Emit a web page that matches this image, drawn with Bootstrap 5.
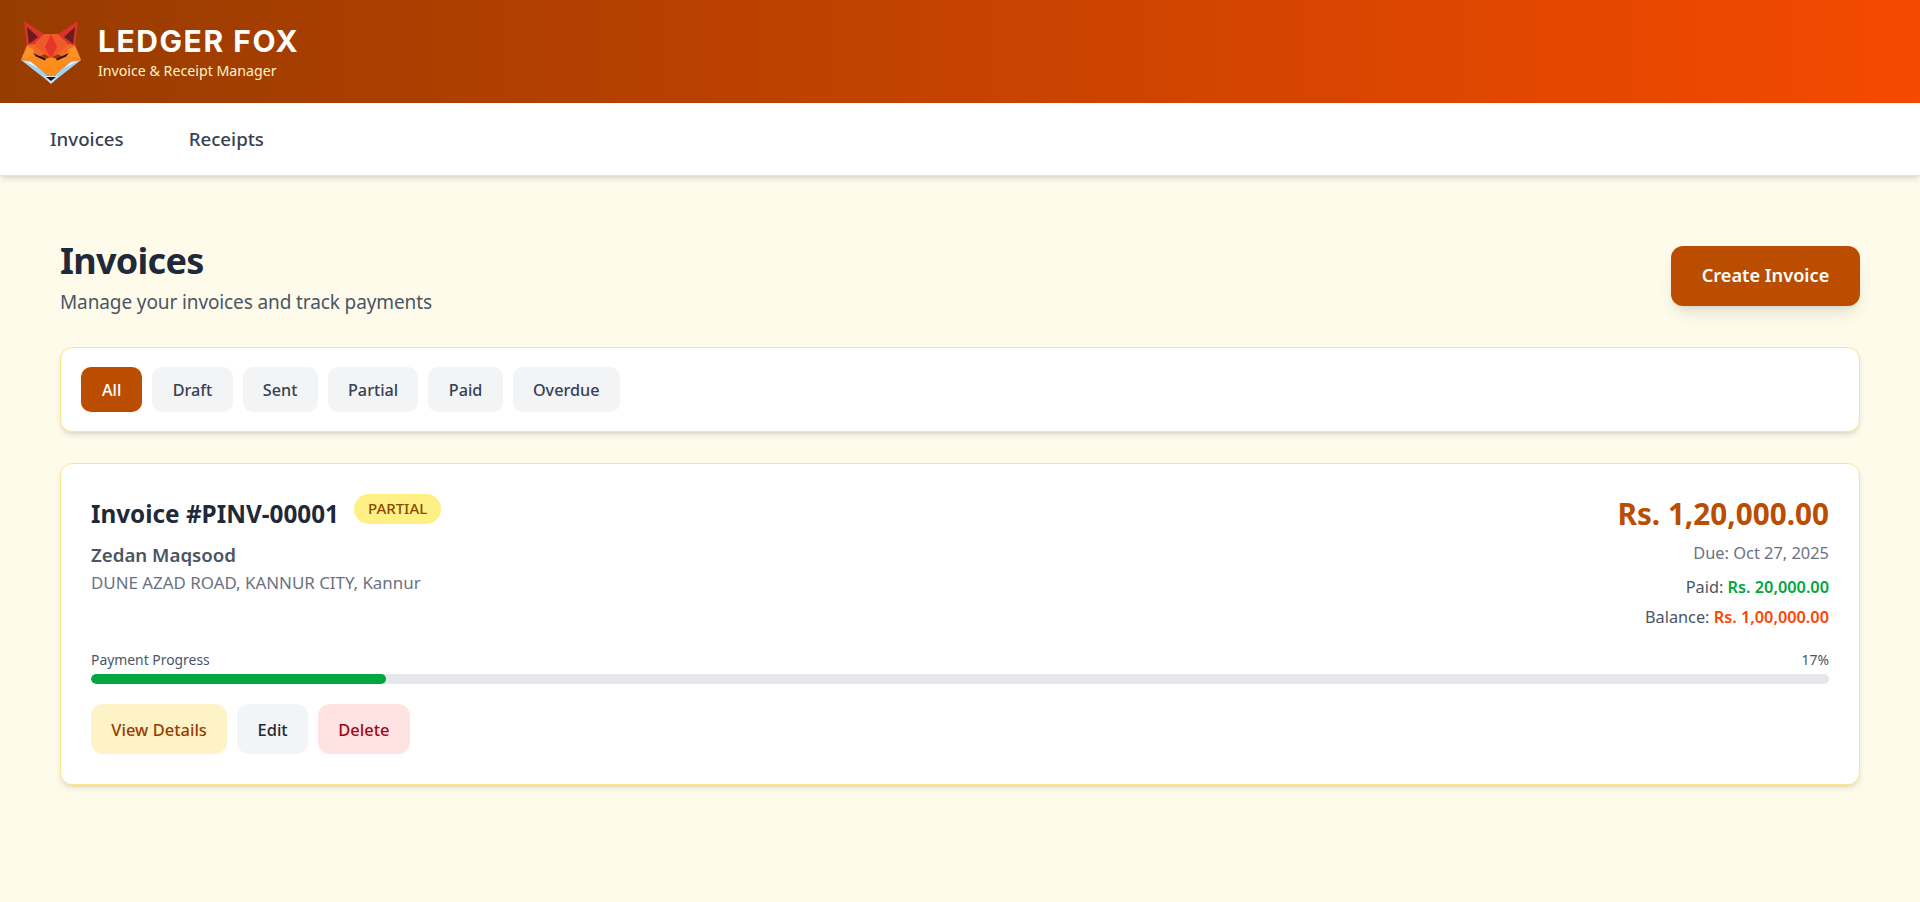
<!DOCTYPE html>
<html lang="en">
<head>
<meta charset="utf-8">
<title>Ledger Fox</title>
<link href="https://cdn.jsdelivr.net/npm/bootstrap@5.3.0/dist/css/bootstrap.min.css" rel="stylesheet">
<style>
body{background:#fffbeb;font-family:"Noto Sans","Open Sans",sans-serif;color:#1e2939;min-height:902px}
.lf-head{height:103px;background:linear-gradient(90deg,#973c00,#f54900);padding:20px;gap:16px}
.lf-brand{font-family:Inter,sans-serif;font-weight:700;font-size:30px;line-height:36px;letter-spacing:.052em;color:#fff}
.lf-tag{font-size:14.2px;line-height:20px;color:#fef3c6;margin-top:2px}
.lf-nav{height:73px;background:#fff;border-bottom:1px solid #fee685;box-shadow:0 4px 6px -1px rgba(0,0,0,.1),0 2px 4px -2px rgba(0,0,0,.1);padding-left:50px;gap:65px}
.lf-nav a{font-size:18.7px;font-weight:500;color:#364153;text-decoration:none}
.lf-main{padding:59px 60px 0}
.lf-h1{font-size:36px;font-weight:700;line-height:51px;margin:0;color:#1e2939;letter-spacing:-.02em}
.lf-sub{font-size:19px;line-height:32px;color:#4a5565;margin:0;letter-spacing:-.006em}
.lf-create{height:60px;width:189px;background:#bb4d00;border:0;border-radius:12px;color:#fff;font-size:18.2px;font-weight:600;box-shadow:0 10px 15px -3px rgba(0,0,0,.1),0 4px 6px -4px rgba(0,0,0,.1);margin-bottom:1px}
.lf-panel{background:#fff;border:1px solid #fee685;border-radius:12px;box-shadow:0 4px 6px -1px rgba(0,0,0,.1),0 2px 4px -2px rgba(0,0,0,.1)}
.lf-filters{margin-top:29px;padding:19px 20px;gap:10px;height:85px}
.lf-pill{height:45px;border:0;border-radius:10px;background:#f3f4f6;color:#364153;font-size:16.2px;font-weight:500;padding:2px 20.3px 0}
.lf-pill.is-on{background:#bb4d00;color:#fff;padding:2px 21px 0}
.lf-card{margin-top:31px;padding:30px}
.lf-title{font-size:24.3px;font-weight:700;line-height:40px;margin:0;color:#1e2939}
.lf-badge{background:#fff085;color:#894b00;font-size:15px;font-weight:500;line-height:20px;border-radius:999px;padding:4px 14px 6px;margin-left:15px}
.lf-name{font-size:18.7px;font-weight:600;color:#4a5565;line-height:28px;margin-top:7px}
.lf-addr{font-size:16.9px;color:#6a7282;line-height:24px;margin-top:2px}
.lf-amount{font-size:29.7px;font-weight:700;line-height:40px;color:#bb4d00}
.lf-due{font-size:16.4px;color:#6a7282;line-height:24px;margin-top:7px}
.lf-line{font-size:16.3px;color:#4a5565;line-height:24px;margin-top:6px}
.lf-line.lf-first{margin-top:10px}
.lf-line b{font-weight:600}
.lf-green{color:#00a63e}.lf-red{color:#ff4500}
.lf-prog-lab{font-size:13.9px;line-height:20px;color:#4a5565;margin-top:21px}
.lf-track{height:10px;background:#e5e7eb;border-radius:999px;margin-top:4px;overflow:hidden}
.lf-fill{height:100%;background:#00a63e;border-radius:999px}
.lf-actions{gap:10px;margin-top:20px}
.lf-act{height:50px;border:0;border-radius:12px;font-size:16.5px;font-weight:500;padding:3px 20.3px 0}
.lf-view{background:#fef3c6;color:#973c00}
.lf-edit{background:#f3f4f6;color:#1e2939}
.lf-del{background:#ffe2e2;color:#9f0712}
</style>
</head>
<body>
<header class="lf-head d-flex align-items-center">
<svg width="62" height="64" viewBox="20 20 62 64" aria-label="Ledger Fox logo" role="img">
<defs><g id="lf-half">
<polygon points="24,21 27,47 37,42 44,34" fill="#d8352a"/>
<polygon points="27,27 29,44 38,37" fill="#6a1b1f"/>
<polygon points="44,34 51,34 51,58 44,54 33,45" fill="#f0592a"/>
<polygon points="27,45 33,44 45,54 38,57 21,60" fill="#f4682a"/>
<polygon points="27,46 21,60 36,56 33,49" fill="#fa9228"/>
<polygon points="51,34 45,47 51,59" fill="#e6352b"/>
<polygon points="21,60 38,56 46,60 47,74" fill="#f98c22"/>
<polygon points="21,60 31,62 46,74 50,83 44,78" fill="#9fd4f3"/>
<polygon points="24,61 31,62 38,68" fill="#e6f5fc"/>
<polygon points="45,59 51,57 51,80 46,75 42,65" fill="#fc8d1c"/>
<polygon points="33,53 46,59 45,60.5 36,56.5" fill="#2a1410"/>
</g></defs>
<use href="#lf-half"/>
<use href="#lf-half" transform="translate(102 0) scale(-1 1)"/>
<polygon points="44,76 58,76 51,84" fill="#cfeaf8"/>
<polygon points="46,77 56,77 51,81" fill="#1c1412"/>
</svg>
<div>
<div class="lf-brand">LEDGER FOX</div>
<div class="lf-tag">Invoice &amp; Receipt Manager</div>
</div>
</header>
<nav class="lf-nav d-flex align-items-center">
<a href="#">Invoices</a>
<a href="#">Receipts</a>
</nav>
<main class="lf-main">
<div class="d-flex justify-content-between align-items-center">
<div>
<h1 class="lf-h1">Invoices</h1>
<p class="lf-sub">Manage your invoices and track payments</p>
</div>
<button class="lf-create" type="button">Create Invoice</button>
</div>
<div class="lf-panel lf-filters d-flex">
<button class="lf-pill is-on" type="button">All</button>
<button class="lf-pill" type="button">Draft</button>
<button class="lf-pill" type="button">Sent</button>
<button class="lf-pill" type="button">Partial</button>
<button class="lf-pill" type="button">Paid</button>
<button class="lf-pill" type="button">Overdue</button>
</div>
<section class="lf-panel lf-card">
<div class="d-flex justify-content-between">
<div>
<div class="d-flex align-items-start">
<h2 class="lf-title">Invoice #PINV-00001</h2>
<span class="lf-badge">PARTIAL</span>
</div>
<div class="lf-name">Zedan Maqsood</div>
<div class="lf-addr">DUNE AZAD ROAD, KANNUR CITY, Kannur</div>
</div>
<div class="text-end">
<div class="lf-amount">Rs. 1,20,000.00</div>
<div class="lf-due">Due: Oct 27, 2025</div>
<div class="lf-line lf-first">Paid: <b class="lf-green">Rs. 20,000.00</b></div>
<div class="lf-line">Balance: <b class="lf-red">Rs. 1,00,000.00</b></div>
</div>
</div>
<div class="lf-prog-lab d-flex justify-content-between"><span>Payment Progress</span><span>17%</span></div>
<div class="lf-track"><div class="lf-fill" style="width:17%"></div></div>
<div class="lf-actions d-flex">
<button class="lf-act lf-view" type="button">View Details</button>
<button class="lf-act lf-edit" type="button">Edit</button>
<button class="lf-act lf-del" type="button">Delete</button>
</div>
</section>
</main>
<script src="https://cdn.jsdelivr.net/npm/bootstrap@5.3.0/dist/js/bootstrap.bundle.min.js"></script>
</body>
</html>
